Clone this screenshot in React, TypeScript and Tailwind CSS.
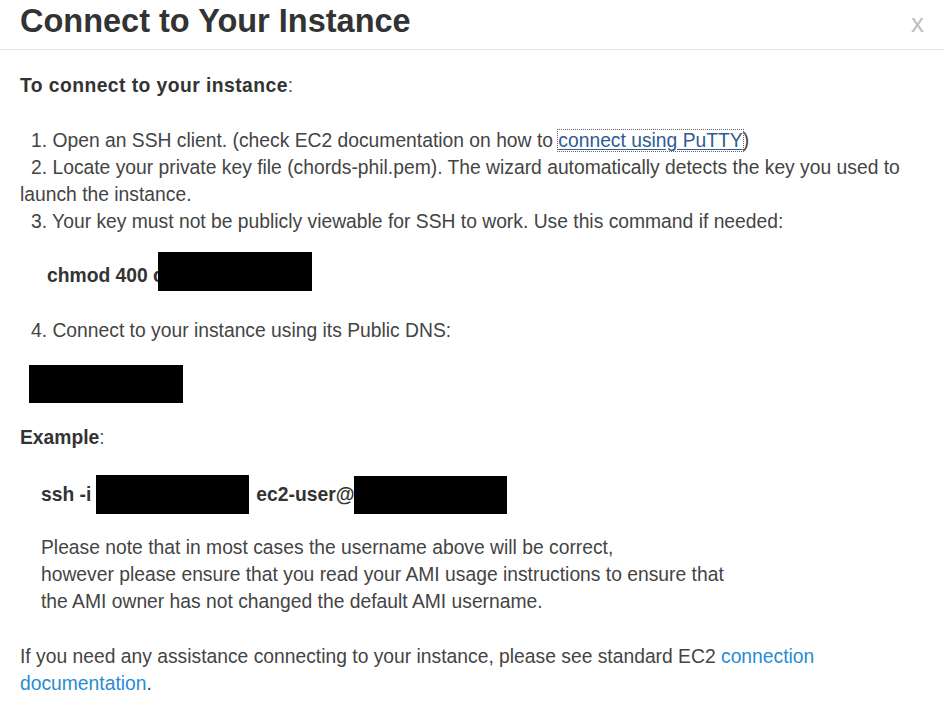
import React from 'react';

const Redacted: React.FC<{ className?: string }> = ({ className = '' }) => (
  <div className={`bg-black shrink-0 ${className}`} />
);

export default function App() {
  return (
    <div className="w-[944px] h-[714px] bg-white overflow-hidden font-['Liberation_Sans',Arial,sans-serif] text-[#444]">
      {/* Header */}
      <div className="h-[50px] border-b border-[#e8e8e8] flex items-baseline justify-between pl-5 pr-5 pt-[3px]">
        <h1 className="text-[32.5px] leading-[36px] font-bold text-[#333]">Connect to Your Instance</h1>
        <span className="text-[26px] leading-[36px] text-[#bdbdbd]">x</span>
      </div>

      {/* Body */}
      <div className="pl-5 pr-1 text-[19.3px] leading-[27px]">
        <p className="mt-[22px] font-bold text-[#333] tracking-[0.45px]">
          To connect to your instance<span className="font-normal tracking-normal text-[#555]">:</span>
        </p>

        <div className="mt-[28px]">
          <p className="indent-[11px]">
            1. Open an SSH client. (check EC2 documentation on how to{' '}
            <a
              href="#"
              className="text-[#2f5b93] underline underline-offset-2 outline-1 outline-dotted outline-[#666]"
            >
              connect using PuTTY
            </a>
            )
          </p>
          <p className="indent-[11px]">
            2. Locate your private key file (chords-phil.pem). The wizard automatically detects the key you used to
            <br />
            launch the instance.
          </p>
          <p className="indent-[11px]">
            3. Your key must not be publicly viewable for SSH to work. Use this command if needed:
          </p>
        </div>

        <div className="mt-[17px] flex items-start pl-[27px]">
          <span className="mt-[10px] font-bold text-[#333] whitespace-nowrap">chmod 400 c</span>
          <Redacted className="-ml-[6px] w-[154px] h-[39px]" />
        </div>

        <p className="mt-[26px] indent-[11px]">4. Connect to your instance using its Public DNS:</p>

        <Redacted className="mt-[21px] ml-[9px] w-[154px] h-[38px]" />

        <p className="mt-[21px] font-bold text-[#333]">
          Example<span className="font-normal text-[#555]">:</span>
        </p>

        <div className="mt-[24px] h-[39px] flex items-center pl-[21px] font-bold text-[#333]">
          <span>ssh -i</span>
          <Redacted className="ml-[5px] w-[153px] h-[39px]" />
          <span className="ml-[7px]">ec2-user@</span>
          <Redacted className="w-[153px] h-[38px]" />
        </div>

        <p className="mt-[20px] pl-[21px]">
          Please note that in most cases the username above will be correct,
          <br />
          however please ensure that you read your AMI usage instructions to ensure that
          <br />
          the AMI owner has not changed the default AMI username.
        </p>

        <p className="mt-[28px]">
          If you need any assistance connecting to your instance, please see standard EC2{' '}
          <a href="#" className="text-[#2a8bd2]">
            connection
            <br />
            documentation
          </a>
          .
        </p>
      </div>
    </div>
  );
}
